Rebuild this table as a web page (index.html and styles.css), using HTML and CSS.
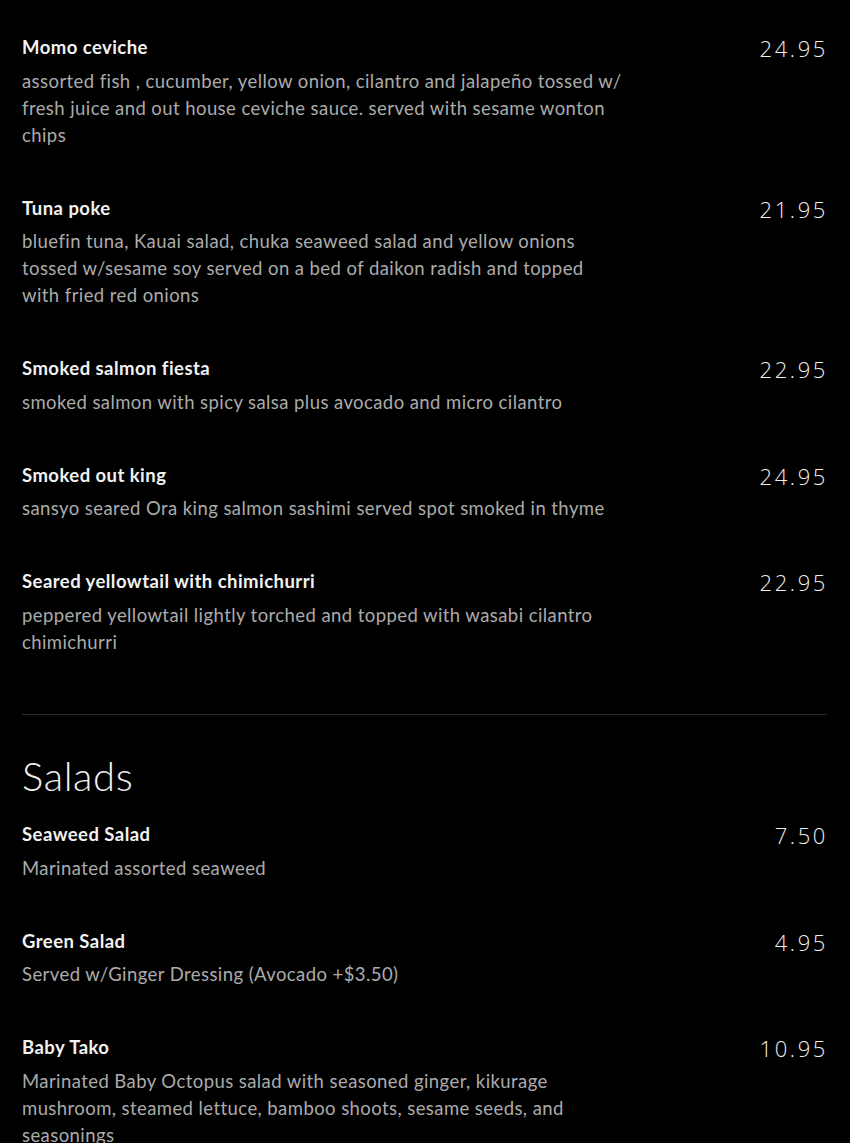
FILE: index.html
```html
<!DOCTYPE html>
<html>
<head>
<meta charset="utf-8">
<link rel="stylesheet" href="styles.css">
</head>
<body>
<main class="menu">
  <section class="section">
    <div class="item">
      <div class="info">
        <h3 class="name">Momo ceviche</h3>
        <p class="desc">assorted fish , cucumber, yellow onion, cilantro and jalapeño tossed w/ fresh juice and out house ceviche sauce. served with sesame wonton chips</p>
      </div>
      <div class="price">24.95</div>
    </div>
    <div class="item">
      <div class="info">
        <h3 class="name">Tuna poke</h3>
        <p class="desc">bluefin tuna, Kauai salad, chuka seaweed salad and yellow onions tossed w/sesame soy served on a bed of daikon radish and topped with fried red onions</p>
      </div>
      <div class="price">21.95</div>
    </div>
    <div class="item">
      <div class="info">
        <h3 class="name">Smoked salmon fiesta</h3>
        <p class="desc">smoked salmon with spicy salsa plus avocado and micro cilantro</p>
      </div>
      <div class="price">22.95</div>
    </div>
    <div class="item">
      <div class="info">
        <h3 class="name">Smoked out king</h3>
        <p class="desc">sansyo seared Ora king salmon sashimi served spot smoked in thyme</p>
      </div>
      <div class="price">24.95</div>
    </div>
    <div class="item">
      <div class="info">
        <h3 class="name">Seared yellowtail with chimichurri</h3>
        <p class="desc">peppered yellowtail lightly torched and topped with wasabi cilantro chimichurri</p>
      </div>
      <div class="price">22.95</div>
    </div>
  </section>
  <section class="section section-top">
    <h2 class="section-title">Salads</h2>
    <div class="item">
      <div class="info">
        <h3 class="name">Seaweed Salad</h3>
        <p class="desc">Marinated assorted seaweed</p>
      </div>
      <div class="price">7.50</div>
    </div>
    <div class="item">
      <div class="info">
        <h3 class="name">Green Salad</h3>
        <p class="desc">Served w/Ginger Dressing (Avocado +$3.50)</p>
      </div>
      <div class="price">4.95</div>
    </div>
    <div class="item">
      <div class="info">
        <h3 class="name">Baby Tako</h3>
        <p class="desc">Marinated Baby Octopus salad with seasoned ginger, kikurage mushroom, steamed lettuce, bamboo shoots, sesame seeds, and seasonings</p>
      </div>
      <div class="price">10.95</div>
    </div>
  </section>
</main>
</body>
</html>
```
FILE: styles.css
```css
html, body {
  margin: 0;
  padding: 0;
  background: #000;
}
body {
  font-family: "Lato", "Noto Sans", sans-serif;
  color: #eaeaea;
}
.menu {
  padding: 35px 23px 0 22px;
}
.section-top {
  border-top: 1px solid #2a2a2a;
  margin-top: 11px;
  padding-top: 38px;
}
.section-title {
  margin: 0 0 23px;
  font-weight: 300;
  font-size: 40px;
  line-height: 46px;
  letter-spacing: 0.6px;
  color: #f0f0f0;
}
.item {
  display: flex;
  justify-content: space-between;
  align-items: flex-start;
  padding-bottom: 47px;
}
.info {
  width: 600px;
}
.name {
  margin: 0;
  font-size: 18.5px;
  font-weight: 700;
  line-height: 24px;
  letter-spacing: 0.45px;
  color: #f2f2f2;
}
.desc {
  margin: 8.6px 0 0;
  font-size: 18.5px;
  line-height: 27px;
  font-weight: 400;
  letter-spacing: 0.42px;
  color: #ababab;
}
.price {
  font-family: "Open Sans", sans-serif;
  font-weight: 300;
  font-size: 22px;
  line-height: 26px;
  letter-spacing: 2.6px;
  color: #f0f0f0;
  margin-right: -1px;
}
```
